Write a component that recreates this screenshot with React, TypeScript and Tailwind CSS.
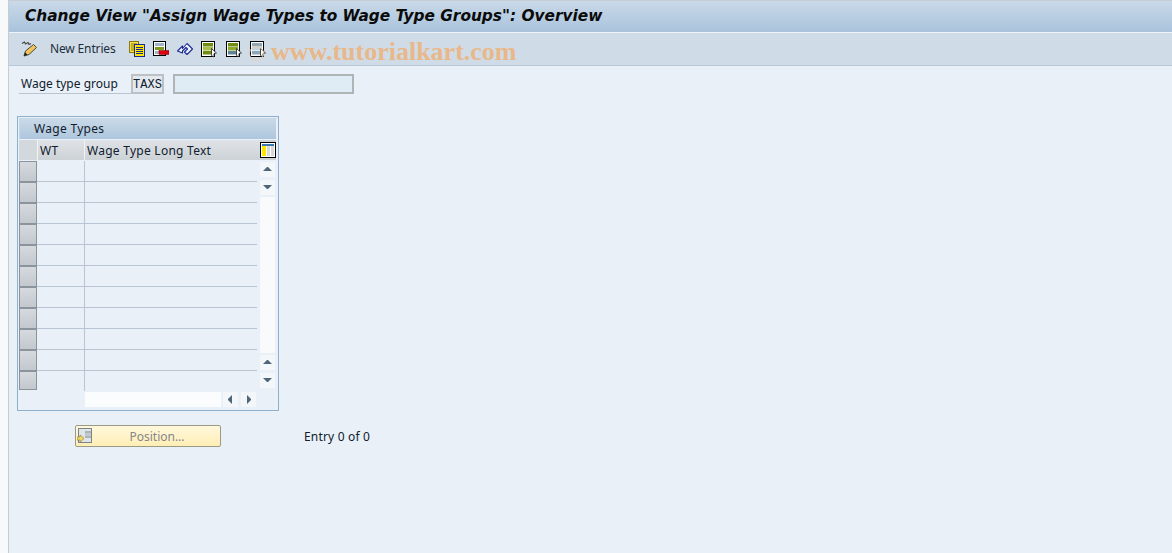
const sans = "font-['Noto_Sans','DejaVu_Sans',sans-serif]";

function Tri({ dir }: { dir: "up" | "down" | "left" | "right" }) {
  const p = {
    up: "2,8 6,4 7,4 11,8",
    down: "2,4 11,4 7,8 6,8",
    left: "8,2 8,11 4,7 4,6",
    right: "5,2 5,11 9,7 9,6",
  }[dir];
  return (
    <svg width="13" height="13" viewBox="0 0 13 13">
      <polygon points={p} fill="#4f6678" />
    </svg>
  );
}

function ListIcon({ variant }: { variant: "a" | "b" | "c" }) {
  const c = {
    a: ["#6f8c10", "#a8bd4a", "#6f8c10"],
    b: ["#6f8c10", "#8ea82e", "#5f8296"],
    c: ["#8fa6b8", "#c4d2de", "#8fa6b8"],
  }[variant];
  return (
    <svg width="16" height="17" viewBox="0 0 16 17">
      <rect x="0.5" y="0.5" width="13" height="15" fill="#fff" stroke="#000" />
      <rect x="2" y="2" width="10" height="3.500" fill={c[0]} />
      <rect x="2" y="6" width="10" height="3.500" fill={c[1]} />
      <rect x="2" y="10" width="10" height="3.500" fill={c[2]} />
      <polygon points="10.500,7.500 15.500,12 13,12.500 13,16 10.500,14.500" fill="#fff" stroke="#222" strokeWidth="0.8" />
    </svg>
  );
}

function Toolbar() {
  return (
    <div className="flex h-[33px] items-center border-b border-[#b9c8d6] bg-[#cfdce7] pl-[12px]">
      <svg width="18" height="18" viewBox="0 0 18 18">
        <path d="M1 3.500l2.500-1.500 1 2 2.500-1.500 1 2 2-1" fill="none" stroke="#444" strokeWidth="1.100" />
        <path d="M3 16l1.500-5 8-6.500 3 3-7.500 7z" fill="#f3c65a" stroke="#444" strokeWidth="1" />
        <path d="M3 16l1-3.500 2.500 2z" fill="#222" />
      </svg>
      <span className={`${sans} ml-[11px] w-[79px] text-[12px] tracking-[-0.15px] text-[#1d2e3c]`}>New Entries</span>
      <div className="flex items-center">
        <svg width="16" height="16" viewBox="0 0 16 16">
          <rect x="0.5" y="0.5" width="9" height="11" fill="#f5e04a" stroke="#8a7a10" />
          <path d="M2 3h6M2 5h3M2 7h3M2 9h3" stroke="#8a7a10" />
          <rect x="5.5" y="3.5" width="10" height="12" fill="#ffe600" stroke="#1a2a90" />
          <path d="M7 6.500h7M7 8.500h7M7 10.500h7M7 12.500h7" stroke="#1a2a90" strokeWidth="1" />
        </svg>
        <svg width="16" height="16" viewBox="0 0 16 16" className="ml-[8px]">
          <rect x="0.5" y="0.5" width="12" height="14" fill="#fff" stroke="#000" />
          <rect x="2" y="2" width="9" height="3" fill="#9fb3c4" />
          <rect x="2" y="6" width="9" height="3" fill="#7e9a1e" />
          <rect x="2" y="10" width="5" height="3" fill="#9fb3c4" />
          <rect x="6" y="9.500" width="10" height="4" fill="#e0000f" stroke="#700" strokeWidth="0.5" />
        </svg>
        <svg width="16" height="15" viewBox="0 0 16 15" className="ml-[8px]">
          <path d="M0.500 9l5-5v2.500l4.500-5 5.500 5.500-5.500 5.500-2.500-2.500 3-3-1.500-1.500-3.500 3.500v2z" fill="#eef3fb" stroke="#1a2a90" strokeWidth="1.100" strokeLinejoin="round" />
        </svg>
        <span className="ml-[8px] flex"><ListIcon variant="a" /></span>
        <span className="ml-[9px] flex"><ListIcon variant="b" /></span>
        <span className="ml-[8px] flex"><ListIcon variant="c" /></span>
      </div>
    </div>
  );
}

function ScrollBtn({ dir }: { dir: "up" | "down" | "left" | "right" }) {
  return (
    <div className="flex h-[15px] w-[15px] items-center justify-center bg-[#f4f7fa]">
      <Tri dir={dir} />
    </div>
  );
}

function Table() {
  const rows = Array.from({ length: 11 });
  return (
    <div className="ml-[8px] mt-[22px] h-[295px] w-[262px] border border-[#8fb0cc] p-[1px]">
      <div className="h-full border-t border-[#c8d6e3]">
        <div className={`${sans} mr-[1px] flex h-[20px] items-center border-l border-[#c8d6e3] bg-gradient-to-b from-[#c9dae8] to-[#aec6dd] pb-[1px] pl-[14px] text-[12px] tracking-[0.3px] text-[#10202e]`}>
          Wage Types
        </div>
        <div className={`${sans} mt-[1px] flex h-[20px] pt-[1px] text-[12px] tracking-[0.26px] text-[#10202e]`}>
          <div className="-mt-[1px] w-[19px] border-r border-[#f0f3f6] bg-[#d3d8dd]" />
          <div className="-mt-[1px] flex w-[47px] items-center border-r border-[#f0f3f6] bg-gradient-to-b from-[#dfe3e7] to-[#cdd2d7] pl-[2px] pt-[1px]">WT</div>
          <div className="-mt-[1px] flex w-[175px] items-center bg-gradient-to-b from-[#dfe3e7] to-[#cdd2d7] pl-[2px] pt-[1px]">Wage Type Long Text</div>
          <div className="-mt-[1px] flex w-[16px] items-center bg-[#cdd2d7]">
            <svg width="16" height="16" viewBox="0 0 16 16">
              <rect x="0.5" y="0.5" width="15" height="15" fill="#fff" stroke="#000" />
              <rect x="2" y="2" width="12" height="2" fill="#3a78b0" />
              <rect x="2" y="4" width="4" height="10" fill="#ffe600" />
              <rect x="7" y="4" width="3" height="10" fill="#d8d8d8" />
              <rect x="11" y="4" width="3" height="10" fill="#d8d8d8" />
            </svg>
          </div>
        </div>
        <div className="mt-[1px] flex h-[230px]">
          <div className="w-[18px]">
            {rows.map((_, i) => (
              <div key={i} className="h-[21px] border border-[#8b949c] bg-gradient-to-b from-[#d6dadf] to-[#c3c8ce] last:h-[19px]" />
            ))}
          </div>
          <div className="w-[48px] border-r border-[#b9c5d3]">
            {rows.map((_, i) => (
              <div key={i} className="h-[21px] border-b border-[#b9c5d3] last:h-[19px] last:border-b-0" />
            ))}
          </div>
          <div className="w-[172px]">
            {rows.map((_, i) => (
              <div key={i} className="h-[21px] border-b border-[#b9c5d3] last:h-[19px] last:border-b-0" />
            ))}
          </div>
          <div className="ml-[3px] flex h-[230px] w-[15px] flex-col">
            <div className="mt-[1px]"><ScrollBtn dir="up" /></div>
            <div className="mt-[3px]"><ScrollBtn dir="down" /></div>
            <div className="mt-[2px] h-[156px] bg-[#f8fafb]" />
            <div className="mt-[2px]"><ScrollBtn dir="up" /></div>
            <div className="mt-[3px]"><ScrollBtn dir="down" /></div>
          </div>
        </div>
        <div className="mt-[1px] flex h-[15px] pl-[66px]">
          <div className="w-[136px] bg-[#fbfcfd]" />
          <div className="ml-[2px]"><ScrollBtn dir="left" /></div>
          <div className="ml-[3px]"><ScrollBtn dir="right" /></div>
        </div>
      </div>
    </div>
  );
}

export default function App() {
  return (
    <div className="relative flex h-[553px] w-[1172px] overflow-hidden bg-[#f8f9fa]">
      <div className="w-[8px] shrink-0" />
      <div className="flex flex-1 flex-col border-l border-t border-[#c4ccd4] bg-[#e9f0f7]">
        <div className="flex h-[31px] items-center bg-gradient-to-b from-[#c9d9e8] to-[#a9c3dc] pl-[16px] font-['DejaVu_Sans',sans-serif] text-[15.35px] font-bold italic text-[#0b0b0b]">
          Change View "Assign Wage Types to Wage Type Groups": Overview
        </div>
        <div className="h-[1px] bg-[#eef3f7]" />
        <Toolbar />
        <div className="mt-[8px] flex h-[20px] items-center">
          <span className={`${sans} ml-[10px] flex h-[20px] w-[112px] items-center border-b border-[#b9c5d3] pl-[2px] pt-[1px] text-[12px] text-[#10202e]`}>
            Wage type group
          </span>
          <span className="flex h-[20px] w-[33px] items-center justify-center border-2 border-[#bcc1c5] bg-[#e3e9ee] pt-[2px] font-['Liberation_Mono',monospace] text-[12px] text-[#10202e]">
            TAXS
          </span>
          <span className="ml-[9px] h-[20px] w-[181px] border-2 border-[#b0b4b6] bg-[#e0ecf5]" />
        </div>
        <Table />
        <div className="mt-[14px] flex h-[22px] items-center">
          <div className={`${sans} relative ml-[66px] flex h-[22px] w-[146px] items-center justify-center rounded-[2px] border border-[#9a9a85] bg-gradient-to-b from-[#fff8dc] to-[#ffeeb4] pl-[18px] pt-[1px] text-[12px] text-[#86878a]`}>
            <svg width="15" height="15" viewBox="0 0 15 15" className="absolute left-[1px] top-[2px]">
              <rect x="1.500" y="0.500" width="13" height="14" fill="#dfe4e8" stroke="#7d8388" />
              <path d="M8 4h6M8 9h6" stroke="#7d8388" />
              <rect x="8" y="5" width="6" height="3" fill="#c2c9cf" />
              <path d="M0 9h3V7l4 3.500-4 3.500v-2H0z" fill="#f2d766" stroke="#8a7a30" strokeWidth="0.6" />
            </svg>
            Position...
          </div>
          <span className={`${sans} ml-[83px] pt-[2px] text-[12px] tracking-[0.17px] text-[#10202e]`}>Entry 0 of 0</span>
        </div>
      </div>
      <div className="absolute left-[271px] top-[37px] font-['Liberation_Serif',serif] text-[26px] font-bold leading-[30px] text-[#e8b88a]">
        www.tutorialkart.com
      </div>
      <div className="absolute left-[249px] top-[46px] h-[15px] w-[15px] rounded-full border border-[#eccdb0]" />
    </div>
  );
}
